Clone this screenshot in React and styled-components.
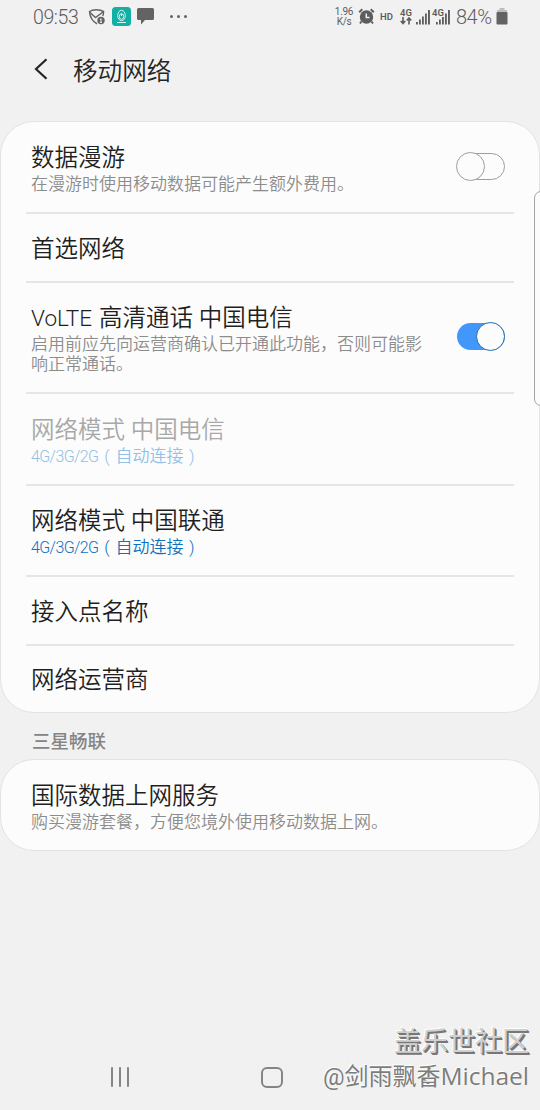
import React from 'react';
import styled, { createGlobalStyle, css } from 'styled-components';

const settings = [
  {
    title: ['数据漫游'],
    summary: ['在漫游时使用移动数据可能产生额外费用。'],
    height: 92,
    toggle: 'off',
  },
  { title: ['首选网络'], height: 69 },
  {
    title: ['高清通话 中国电信'],
    latin: 'VoLTE',
    summary: ['启用前应先向运营商确认已开通此功能，否则可能影', '响正常通话。'],
    height: 111,
    toggle: 'on',
  },
  { title: ['网络模式', '中国电信'], mode: '自动连接', height: 92, disabled: true },
  { title: ['网络模式', '中国联通'], mode: '自动连接', height: 91 },
  { title: ['接入点名称'], height: 69 },
  { title: ['网络运营商'], height: 66 },
];

const Shield = () => (
  <svg width="18" height="18" viewBox="0 0 18 18" fill="none" stroke="#636363" strokeWidth="1.5">
    <path d="M9 15.8C4.800 13.500 2 9.500 1.500 3.500C4.500 1.300 12 1.300 15.500 3.500C15.500 5 15.300 6.500 14.800 8" />
    <path d="M2 4.500L7.500 9.500L15 4" />
    <circle cx="13" cy="12.500" r="3.700" fill="#636363" stroke="none" />
    <path d="M13 10.500V14.500M12 11.300H13M12 14.500H14" stroke="#eee" strokeWidth="1" />
  </svg>
);

const AppBadge = () => (
  <svg width="19" height="19" viewBox="0 0 19 19" fill="none" stroke="#c9f5ef">
    <rect width="19" height="19" rx="3.500" fill="#12b0a4" stroke="none" />
    <ellipse cx="9.500" cy="8.500" rx="3.800" ry="5.200" />
    <ellipse cx="9.500" cy="9.500" rx="2.200" ry="2.800" />
    <path d="M9.500 6.500V9M5 15.500H14" />
  </svg>
);

const Bubble = () => (
  <svg width="17" height="17" viewBox="0 0 17 17" fill="#636363">
    <path d="M1.500 0H15.500Q17 0 17 1.500V10.500Q17 12 15.500 12H8L4 16.500V12H1.500Q0 12 0 10.500V1.500Q0 0 1.500 0Z" />
  </svg>
);

const Alarm = () => (
  <svg width="17" height="17" viewBox="0 0 17 17" fill="none" stroke="#5d5d5d">
    <circle cx="8.500" cy="9" r="6.700" fill="#5d5d5d" stroke="none" />
    <path d="M1.200 4.200L4.300 1.200M15.800 4.200L12.700 1.200M3.500 13.500L2 15.500M13.500 13.500L15 15.500" strokeWidth="2" />
    <path d="M8.300 5.500V9.500H11.500" stroke="#f1f1f1" strokeWidth="1.500" />
  </svg>
);

const Bars = () => (
  <svg width="15" height="16" viewBox="0 0 15 16" fill="#5d5d5d">
    <path d="M0 13H1.800V15.500H0ZM3 10.500H4.800V15.500H3ZM6 7.500H7.800V15.500H6ZM9 4.500H10.800V15.500H9ZM12 1H13.900V15.500H12Z" />
  </svg>
);

const Updown = () => (
  <svg width="12" height="8" viewBox="0 0 12 8" fill="none" stroke="#5d5d5d" strokeWidth="1.600">
    <path d="M3 0V6M0.800 4L3 6.500L5.200 4M9 7.500V1.500M6.800 3.500L9 1L11.200 3.500" />
  </svg>
);

const Battery = () => (
  <svg width="12" height="17" viewBox="0 0 12 17">
    <path d="M3.500 0H8.500V2H11V5H1V2H3.500Z" fill="#bdbdbd" />
    <rect x="0.500" y="4" width="11" height="12.500" rx="1" fill="#636363" />
  </svg>
);

const Item = ({ item }) => (
  <Row $height={item.height}>
    <Labels $tall={item.summary?.length > 1}>
      <Title $disabled={item.disabled}>
        {item.latin && <Latin>{item.latin}</Latin>}
        {item.title.join(' ')}
      </Title>
      {item.summary && item.summary.map((line) => <Summary key={line}>{line}</Summary>)}
      {item.mode && (
        <Mode $disabled={item.disabled}>
          <ModeLatin>4G/3G/2G</ModeLatin>
          <Paren>(</Paren>
          {item.mode}
          <Paren>)</Paren>
        </Mode>
      )}
    </Labels>
    {item.toggle && (
      <Track $on={item.toggle === 'on'}>
        <Knob $on={item.toggle === 'on'} />
      </Track>
    )}
  </Row>
);

const App = () => (
  <>
    <GlobalStyle />
    <Screen>
      <StatusBar>
        <Clock>09:53</Clock>
        <StatusIcons>
          <Shield />
          <AppBadge />
          <Bubble />
        </StatusIcons>
        <Dots><i /><i /><i /></Dots>
        <StatusRight>
          <Speed><span>1.96</span><span>K/s</span></Speed>
          <Alarm />
          <Hd>HD</Hd>
          <Sim><SimTag>4G</SimTag><Updown /></Sim>
          <Bars />
          <SimSecond><Bars /><SimBadge>4G</SimBadge></SimSecond>
          <Percent>84%</Percent>
          <Battery />
        </StatusRight>
      </StatusBar>

      <Header>
        <svg width="14" height="22" viewBox="0 0 14 22" fill="none" stroke="#252525" strokeWidth="2.200">
          <path d="M12.500 1.200L2 11L12.500 20.800" />
        </svg>
        <Heading>移动网络</Heading>
      </Header>

      <Card>
        {settings.map((item, i) => <Item key={i} item={item} />)}
      </Card>
      <SectionTitle>三星畅联</SectionTitle>
      <Card>
        <Item
          item={{
            title: ['国际数据上网服务'],
            summary: ['购买漫游套餐，方便您境外使用移动数据上网。'],
            height: 90,
          }}
        />
      </Card>

      <NavBar>
        <Recents><i /><i /><i /></Recents>
        <Home />
        <svg width="12" height="20" viewBox="0 0 12 20" fill="none" stroke="#858585" strokeWidth="2">
          <path d="M10.500 1L1.500 10L10.500 19" />
        </svg>
      </NavBar>
      <EdgeHandle />
      <Watermark>
        <Community>盖乐世社区</Community>
        <Author>@剑雨飘香<Name>Michael</Name></Author>
      </Watermark>
    </Screen>
  </>
);

const GlobalStyle = createGlobalStyle`
  body {
    margin: 0;
    background: #f1f1f1;
  }

  * {
    box-sizing: border-box;
  }

  svg {
    flex: none;
  }
`;

const Screen = styled.div`
  position: relative;
  display: flex;
  flex-direction: column;
  width: 540px;
  height: 1110px;
  overflow: hidden;
  background: #f1f1f1;
  color: #252525;
  font-family: Roboto, 'Noto Sans CJK SC', sans-serif;
  white-space: nowrap;
`;

const StatusBar = styled.div`
  display: flex;
  align-items: center;
  height: 33px;
  padding: 0 32px 0 33px;
  color: #5d5d5d;
`;

const Clock = styled.div`
  width: 55px;
  padding-top: 1px;
  font-size: 19.500px;
  font-weight: 300;
  letter-spacing: -0.400px;
`;

const StatusIcons = styled.div`
  display: flex;
  align-items: center;
  gap: 6px;
`;

const Dots = styled.div`
  display: flex;
  gap: 4px;
  margin-left: 16px;

  i {
    width: 3px;
    height: 3px;
    border-radius: 50%;
    background: #636363;
  }
`;

const StatusRight = styled.div`
  display: flex;
  align-items: center;
  margin-left: auto;
`;

const Speed = styled.div`
  display: flex;
  flex-direction: column;
  align-items: center;
  width: 20px;
  margin-right: 4px;
  font-size: 10px;
  line-height: 10px;
  letter-spacing: -0.300px;
`;

const Hd = styled.div`
  width: 20px;
  margin-left: 5px;
  font-size: 9.500px;
  font-weight: 600;
`;

const Sim = styled.div`
  display: flex;
  flex-direction: column;
  width: 16px;
`;

const SimTag = styled.div`
  font-size: 9.500px;
  font-weight: 600;
  line-height: 9px;
`;

const SimSecond = styled.div`
  position: relative;
  display: flex;
  margin-left: 5px;
`;

const SimBadge = styled(SimTag)`
  position: absolute;
  left: -4px;
  top: -1px;
  background: #f1f1f1;
`;

const Percent = styled.div`
  width: 40px;
  margin-left: 5px;
  padding-top: 1px;
  font-size: 20px;
  font-weight: 300;
  letter-spacing: -0.500px;
`;

const Header = styled.header`
  display: flex;
  align-items: center;
  gap: 25px;
  height: 72px;
  margin-bottom: 16px;
  padding-left: 34px;
`;

const Heading = styled.h1`
  margin: 0;
  font-size: 24.600px;
  font-weight: 350;
`;

const Card = styled.section`
  flex: none;
  padding: 0 25px;
  border: 1px solid #e3e3e3;
  border-radius: 34px;
  background: #fcfcfc;
`;

const Row = styled.div`
  display: flex;
  align-items: center;
  justify-content: space-between;
  height: ${({ $height }) => $height}px;
  padding: 0 9px 0 5px;
  border-bottom: 2px solid #e6e6e6;

  &:last-child {
    border-bottom: 0;
  }
`;

const Labels = styled.div`
  display: flex;
  flex-direction: column;
  padding-top: ${({ $tall }) => ($tall ? 0 : 2)}px;
`;

const Title = styled.div`
  font-size: 23.500px;
  font-weight: 350;
  line-height: 32px;
  color: ${({ $disabled }) => ($disabled ? '#a8a8a8' : '#1f1f1f')};
`;

const Latin = styled.span`
  margin-right: 7px;
  font-size: 22.500px;
  font-weight: 300;
  line-height: 1;
`;

const Summary = styled.div`
  font-size: 17px;
  font-weight: 350;
  line-height: 20px;
  color: #8c8c8c;
`;

const Mode = styled(Summary)`
  color: ${({ $disabled }) => ($disabled ? '#94c0e6' : '#0c72c0')};
`;

const ModeLatin = styled.span`
  font-size: 16px;
  letter-spacing: -0.600px;
`;

const Paren = styled.span`
  display: inline-block;
  width: 17px;
  text-align: center;
`;

const Track = styled.div`
  position: relative;
  width: 48px;
  height: 27px;
  margin-bottom: 2px;
  border-radius: 14px;
  ${({ $on }) => ($on
    ? css`background: #4297fa;`
    : css`border: 1px solid #9d9d9d;`)}
`;

const Knob = styled.div`
  position: absolute;
  top: ${({ $on }) => ($on ? -1 : -2)}px;
  ${({ $on }) => ($on ? 'right: 0' : 'left: -2px')};
  width: 29px;
  height: 29px;
  border: 1px solid ${({ $on }) => ($on ? '#1c6cb5' : '#9d9d9d')};
  border-radius: 50%;
  background: #fcfcfc;
`;

const SectionTitle = styled.h2`
  margin: 0;
  padding-left: 32px;
  height: 46px;
  font-size: 18.500px;
  font-weight: 500;
  line-height: 59px;
  color: #858585;
`;

const NavBar = styled.nav`
  display: flex;
  align-items: center;
  height: 66px;
  margin-top: auto;
  padding-left: 111px;
`;

const Recents = styled.div`
  display: flex;
  gap: 6px;
  width: 150px;

  i {
    width: 2px;
    height: 20px;
    border-radius: 1px;
    background: #858585;
  }
`;

const Home = styled.div`
  width: 22px;
  height: 21px;
  margin-right: 137px;
  border: 2px solid #858585;
  border-radius: 6px;
`;

// edge panel handle floats over the cards
const EdgeHandle = styled.div`
  position: absolute;
  top: 191px;
  right: -8px;
  width: 14px;
  height: 215px;
  border: 1px solid #a5a5a5;
  border-radius: 8px;
  background: #fcfcfc;
`;

const Watermark = styled.div`
  position: absolute;
  right: 11px;
  bottom: 16px;
  display: flex;
  flex-direction: column;
  align-items: flex-end;
`;

const Community = styled.div`
  color: #d0d0d0;
  font-size: 27px;
  font-weight: 400;
  line-height: 34px;
  text-shadow: 1px 1px 0 #777, 2px 2px 0 #777, -1px -1px 0 #fff;
`;

const Author = styled.div`
  color: #7d7d7d;
  font-size: 24px;
  font-weight: 400;
  line-height: 34px;
  text-shadow: -1px -1px 0 #fff;
`;

const Name = styled.span`
  font-family: 'Open Sans', sans-serif;
  font-size: 24.500px;
`;

export default App;
